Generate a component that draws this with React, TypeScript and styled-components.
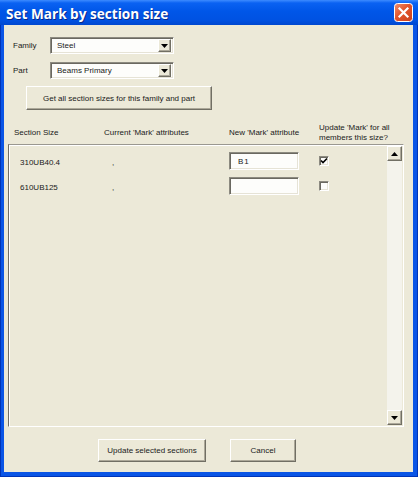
import React from 'react';
import styled, { createGlobalStyle, css } from 'styled-components';

const Global = createGlobalStyle`
  html, body { margin: 0; padding: 0; background: #ffffff; }
  body { font-family: "Liberation Sans", Arial, sans-serif; }
  * { box-sizing: border-box; }
`;

const raised = css`
  background: #ece9d8;
  border: 1px solid;
  border-color: #ffffff #716f64 #716f64 #ffffff;
  box-shadow: inset -1px -1px 0 #aca899;
`;

const sunken = css`
  background: #fdfdfb;
  border: 1px solid;
  border-color: #8c8a80 #ffffff #ffffff #8c8a80;
  box-shadow: inset 1px 1px 0 #6a6860, inset -1px -1px 0 #e6e3d6;
`;

const Window = styled.div`
  width: 418px;
  height: 477px;
  display: flex;
  flex-direction: column;
  background: #0a55e6;
  box-shadow: inset 0 0 0 1px #0034b8;
`;

const TitleBar = styled.div`
  height: 25px;
  flex: none;
  display: flex;
  align-items: center;
  justify-content: space-between;
  padding: 0 5px 0 6px;
  background: linear-gradient(#3d8bff 0%, #0a62f2 12%, #0056e8 45%, #0052e2 80%, #0048cf 100%);
`;

const Title = styled.span`
  font-family: "Open Sans", "DejaVu Sans", sans-serif;
  font-weight: 700;
  font-size: 13.6px;
  color: #ffffff;
  text-shadow: 1px 1px 0 #0a2a8a;
  margin-top: 1px;
`;

const Client = styled.div`
  flex: 1;
  margin: 0 5px 5px 4px;
  background: #ece9d8;
  display: flex;
  flex-direction: column;
  padding-top: 12px;
  font-size: 8px;
  color: #1a1a1a;
`;

const FieldRow = styled.div`
  display: flex;
  align-items: center;
  height: 17px;
  padding-left: 9px;
  & + & { margin-top: 8px; }
`;

const FieldLabel = styled.span`
  width: 37px;
`;

const Combo = styled.div`
  ${sunken};
  width: 124px;
  height: 17px;
  display: flex;
  align-items: center;
  padding: 2px 2px 2px 6px;
`;

const ComboText = styled.span`
  flex: 1;
`;

const DropButton = styled.div`
  ${raised};
  width: 13px;
  height: 13px;
  display: flex;
  align-items: center;
  justify-content: center;
`;

const ActionButton = styled.button<{ $w: number }>`
  ${raised};
  width: ${p => p.$w}px;
  height: 24px;
  font-family: "Liberation Sans", Arial, sans-serif;
  font-size: 8px;
  color: #1a1a1a;
  padding: 0;
  cursor: default;
`;

const TopButtonWrap = styled.div`
  margin: 7px 0 0 22px;
`;

const Header = styled.div`
  margin-top: 12px;
  height: 22px;
  display: grid;
  grid-template-columns: 90px 125px 90px 1fr;
  align-items: center;
  padding-left: 10px;
  line-height: 10px;
`;

const Table = styled.div`
  margin: 0 9px 0 4px;
  height: 283px;
  display: flex;
  border: 1px solid;
  border-color: #9a9890 #ffffff #ffffff #716f64;
  box-shadow: inset 1px 1px 0 #ffffff;
  padding: 1px;
`;

const Rows = styled.div`
  flex: 1;
  padding-top: 6px;
`;

const Row = styled.div`
  display: grid;
  grid-template-columns: 92px 117px 90px 10px;
  align-items: center;
  height: 18px;
  padding-left: 10px;
  & + & { margin-top: 7px; }
`;

const Cell = styled.span<{ $drop?: number }>`
  padding-top: ${p => p.$drop ?? 0}px;
`;

const TextBox = styled.div`
  ${sunken};
  width: 70px;
  height: 18px;
  display: flex;
  align-items: center;
  padding-left: 8px;
  font-size: 8px;
  letter-spacing: 1px;
`;

const CheckBox = styled.div`
  ${sunken};
  width: 10px;
  height: 10px;
  display: flex;
  align-items: center;
  justify-content: center;
`;

const ScrollBar = styled.div`
  width: 15px;
  display: flex;
  flex-direction: column;
  background: #f4f3ec;
`;

const ScrollButton = styled.div`
  ${raised};
  height: 15px;
  display: flex;
  align-items: center;
  justify-content: center;
`;

const Track = styled.div`
  flex: 1;
`;

const Footer = styled.div`
  margin-top: 12px;
  display: flex;
  gap: 24px;
  padding-left: 94px;
  & > button { height: 23px; }
`;

const Tri = ({ up }: { up?: boolean }) => (
  <svg width="7" height="4" viewBox="0 0 7 4">
    <polygon points={up ? '3.5,0 7,4 0,4' : '0,0 7,0 3.5,4'} fill="#000" />
  </svg>
);

const CloseIcon = () => (
  <svg width="19" height="19" viewBox="0 0 19 19">
    <defs>
      <linearGradient id="cg" x1="0" y1="0" x2="1" y2="1">
        <stop offset="0" stopColor="#f2916e" />
        <stop offset="0.45" stopColor="#e2552c" />
        <stop offset="1" stopColor="#c8401c" />
      </linearGradient>
    </defs>
    <rect x="0.5" y="0.5" width="18" height="18" rx="3" fill="url(#cg)" stroke="#ffffff" />
    <path d="M5.5 5.5 L13.5 13.5 M13.5 5.5 L5.5 13.5" stroke="#ffffff" strokeWidth="2.2" strokeLinecap="square" />
  </svg>
);

const Check = () => (
  <svg width="8" height="8" viewBox="0 0 8 8">
    <path d="M1 3.5 L3 5.5 L7 1.5" stroke="#000" strokeWidth="1.6" fill="none" />
  </svg>
);

const rows = [
  { size: '310UB40.4', mark: 'B1', checked: true },
  { size: '610UB125', mark: '', checked: false },
];

export default function App() {
  return (
    <>
      <Global />
      <Window>
        <TitleBar>
          <Title>Set Mark by section size</Title>
          <CloseIcon />
        </TitleBar>
        <Client>
          <FieldRow>
            <FieldLabel>Family</FieldLabel>
            <Combo>
              <ComboText>Steel</ComboText>
              <DropButton><Tri /></DropButton>
            </Combo>
          </FieldRow>
          <FieldRow>
            <FieldLabel>Part</FieldLabel>
            <Combo>
              <ComboText>Beams Primary</ComboText>
              <DropButton><Tri /></DropButton>
            </Combo>
          </FieldRow>
          <TopButtonWrap>
            <ActionButton $w={186}>Get all section sizes for this family and part</ActionButton>
          </TopButtonWrap>
          <Header>
            <span>Section Size</span>
            <span>Current 'Mark' attributes</span>
            <span>New 'Mark' attribute</span>
            <span>Update 'Mark' for all<br />members this size?</span>
          </Header>
          <Table>
            <Rows>
              {rows.map(r => (
                <Row key={r.size}>
                  <Cell $drop={2}>{r.size}</Cell>
                  <Cell $drop={2}>,</Cell>
                  <TextBox>{r.mark}</TextBox>
                  <CheckBox>{r.checked ? <Check /> : null}</CheckBox>
                </Row>
              ))}
            </Rows>
            <ScrollBar>
              <ScrollButton><Tri up /></ScrollButton>
              <Track />
              <ScrollButton><Tri /></ScrollButton>
            </ScrollBar>
          </Table>
          <Footer>
            <ActionButton $w={108}>Update selected sections</ActionButton>
            <ActionButton $w={66}>Cancel</ActionButton>
          </Footer>
        </Client>
      </Window>
    </>
  );
}
